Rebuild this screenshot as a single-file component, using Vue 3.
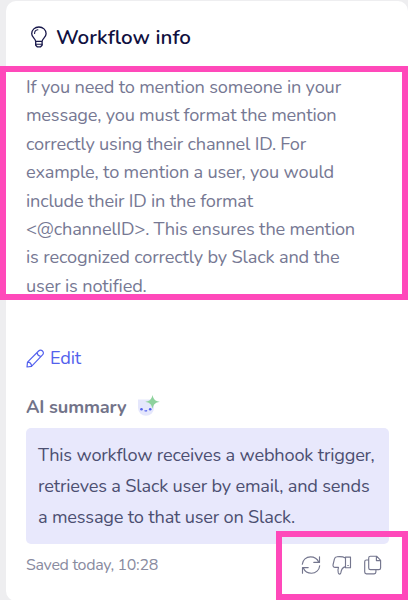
<script setup>
const infoLines = [
  { text: 'If you need to mention someone in your', width: 315 },
  { text: 'message, you must format the mention', width: 310.5 },
  { text: 'correctly using their channel ID. For', width: 280 },
  { text: 'example, to mention a user, you would', width: 308 },
  { text: 'include their ID in the format', width: 227 },
  { text: '<@channelID>. This ensures the mention', width: 329 },
  { text: 'is recognized correctly by Slack and the', width: 313.5 },
  { text: 'user is notified.', width: 120.5 },
]

const summaryLines = [
  { text: 'This workflow receives a webhook trigger,', width: 336.5 },
  { text: 'retrieves a Slack user by email, and sends', width: 331.5 },
  { text: 'a message to that user on Slack.', width: 257 },
]

// Tracks a line of text out or in so that it fills the given measure.
const vFit = {
  mounted(el, { value }) {
    const natural = el.getBoundingClientRect().width
    el.style.letterSpacing = `${(value - natural) / el.textContent.length}px`
  },
}
</script>

<template>
  <main class="page">
    <section class="card">
      <header class="heading">
        <svg class="bulb" width="18" height="22" viewBox="0 0 18 22">
          <path d="M5.600 15.300C5.600 12.600 1.700 11.400 1.700 7.700C1.700 3.800 4.900 1 8.900 1s7.200 2.800 7.200 6.700c0 3.700-3.900 4.900-3.900 7.600zM5.700 15.300v3.900l1.500 1.600h3.400l1.500-1.600v-3.900" />
          <path class="thin" d="M5.700 18.200h6.400M4.600 7.400c0-2 1.400-3.400 3.300-3.600" />
        </svg>
        <h1><span v-fit="135">Workflow info</span></h1>
      </header>

      <p class="info">
        <span v-for="line in infoLines" :key="line.text" class="row"><span v-fit="line.width">{{ line.text }}</span></span>
      </p>

      <a class="edit">
        <svg width="19" height="19" viewBox="0 0 19 19">
          <path d="M1 18l.5-4.900L12.600 2c1.200-1.200 2.700-1.200 3.900 0s1.200 2.700 0 3.900L5.500 17.400zM1.500 13.100c2.400-.2 4.200 1.800 4 4.300M11.300 3.300c-.3 2.400 1.500 4.200 3.900 3.900" />
        </svg>
        <span v-fit="31">Edit</span>
      </a>

      <div class="ai-title">
        <h2><span v-fit="100.5">AI summary</span></h2>
        <svg width="23" height="22" viewBox="0 0 23 22">
          <path fill="#e5e7fc" d="M1 4.500h16v8.300a8 8 0 0 1-16 0z" />
          <path fill="#8ed29d" d="M15.500 0C16.500 4.300 18 5.900 22.800 6.800 18 7.700 16.500 9.300 15.500 13.800 14.500 9.300 13 7.700 8.200 6.800 13 5.900 14.500 4.300 15.500 0z" />
          <circle cx="4.500" cy="14.200" r="1.300" fill="#5361ed" />
          <circle cx="13.200" cy="14.200" r="1.300" fill="#5361ed" />
          <path d="M7.600 15.500c.8.600 1.700.6 2.500 0" fill="none" stroke="#5361ed" stroke-width="1.100" />
        </svg>
      </div>

      <p class="summary">
        <span v-for="line in summaryLines" :key="line.text" class="row"><span v-fit="line.width">{{ line.text }}</span></span>
      </p>

      <footer class="footer">
        <span v-fit="132" class="saved">Saved today, 10:28</span>
        <div class="actions">
          <svg width="20" height="20" viewBox="0 0 20 20">
            <path d="M1.300 9.200C1.700 4.800 5.300 1.800 9.500 1.800c3.700 0 6.800 2 8.200 5.200M18.500 1.800v5.600h-5.700M18.700 10.800c-.4 4.400-4 7.400-8.200 7.400-3.700 0-6.800-2-8.200-5.200M1.500 18.200v-5.600h5.700" />
          </svg>
          <svg width="20" height="20" viewBox="0 0 20 20">
            <path d="M13.500 2.900C11 1.600 8 1.500 5 1.800 3.300 1.900 2.700 2.800 2.400 4.100L1.100 9.500c-.4 1.700.5 2.900 2.100 2.900h3.300c-.7 1.800-.6 3.900-.2 5.500.5 1.700 2.200 1.500 2.500 0 .5-3.400 1.700-5.700 4.700-6.300M13.500 2.100h5v10.600h-5zM15.800 10.500h.5" />
          </svg>
          <svg width="20" height="20" viewBox="0 0 20 20">
            <path d="M7.400 1.200h6.200l4 4.200v7.500c0 1-.7 1.700-1.700 1.700H7.400c-1 0-1.700-.7-1.700-1.700v-10c0-1 .7-1.700 1.700-1.700zM13.400 1.400v4.200h4M5.500 5H3.400c-1 0-1.700.7-1.700 1.700v10.400c0 1 .7 1.700 1.700 1.700h7.800c1 0 1.700-.7 1.700-1.700v-2.300" />
          </svg>
        </div>
      </footer>
    </section>

    <div class="mark mark-info"></div>
    <div class="mark mark-actions"></div>
  </main>
</template>

<style>
body {
  background: #eeeef0;
}
</style>

<style scoped>
.page {
  position: relative;
  box-sizing: border-box;
  width: 408px;
  height: 600px;
  padding: 1px 0 0 6px;
  overflow: hidden;
  background: #eeeef0;
  font-family: Nunito, Lato, sans-serif;
}

.card {
  box-sizing: border-box;
  height: 600px;
  padding: 21px 19px 0 20px;
  border-radius: 10px;
  background: #fff;
  white-space: nowrap;
}

h1,
h2,
p {
  margin: 0;
}

svg {
  flex: none;
}

.heading {
  display: flex;
  align-items: center;
  gap: 8px;
  height: 30px;
  padding-left: 4px;
}

.bulb,
.edit svg,
.actions svg {
  fill: none;
  stroke-linecap: round;
  stroke-linejoin: round;
}

.bulb {
  stroke: #17174a;
  stroke-width: 1.3;
}

.thin {
  stroke-width: 1.1;
}

h1 {
  color: #101040;
  font-size: 20.6px;
  font-weight: 650;
  line-height: 27px;
}

.info {
  margin-top: 21px;
  color: #767893;
  font-size: 18.2px;
  line-height: 28.4px;
}

.row {
  display: block;
}

.edit {
  display: flex;
  align-items: center;
  gap: 5px;
  height: 26px;
  margin-top: 45px;
  color: #5361ed;
  font-size: 18.2px;
}

.edit svg {
  stroke: #5361ed;
  stroke-width: 1.2;
}

.ai-title {
  display: flex;
  align-items: center;
  gap: 10px;
  height: 28px;
  margin-top: 22px;
}

.ai-title svg {
  margin-bottom: 2px;
}

h2 {
  color: #727389;
  font-size: 18.2px;
  font-weight: 700;
}

.summary {
  box-sizing: border-box;
  height: 116px;
  margin-top: 7px;
  padding: 12px;
  border-radius: 5px;
  background: #e8e8fc;
  color: #4c4f71;
  font-size: 18.2px;
  line-height: 31px;
}

.footer {
  display: flex;
  align-items: center;
  justify-content: space-between;
  height: 41px;
  padding-right: 6px;
}

.saved {
  color: #898b9f;
  font-size: 16px;
}

.actions {
  display: flex;
  gap: 11px;
}

.actions svg {
  stroke: #74768e;
  stroke-width: 1.15;
}

.mark {
  position: absolute;
  box-sizing: border-box;
  border: 6px solid #ff49ba;
}

.mark-info {
  inset: 66px 0 auto 0;
  height: 234px;
}

.mark-actions {
  inset: 531px 0 0 276px;
}
</style>
